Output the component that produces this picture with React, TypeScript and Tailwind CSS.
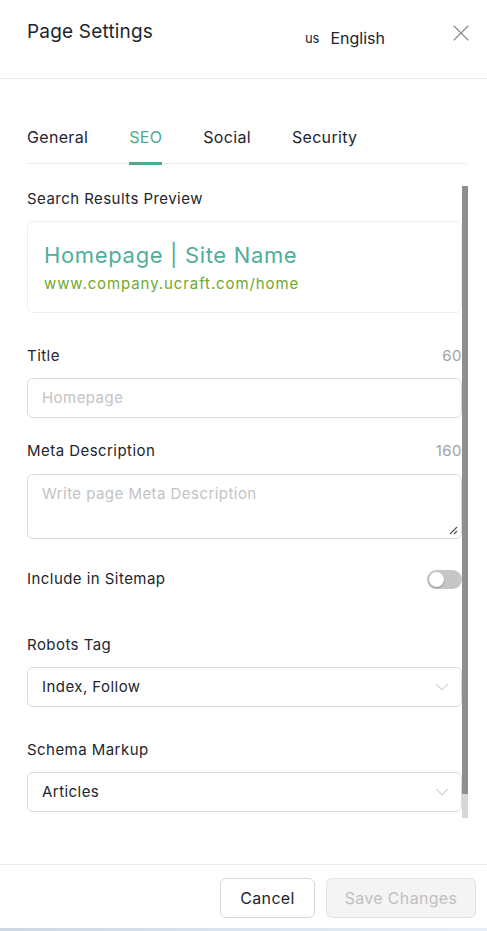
import { X, ChevronDown } from "lucide-react";

function Field({ label, count, children, className }: { label: string; count?: string; children: React.ReactNode; className?: string }) {
  return (
    <div className={className}>
      <div className="flex items-center justify-between text-[15px] leading-[20px] tracking-[0.03em]">
        <span className="text-[#22252e]">{label}</span>
        {count && <span className="text-[#a3a3a3]">{count}</span>}
      </div>
      {children}
    </div>
  );
}

function Select({ value }: { value: string }) {
  return (
    <div className="mt-[12px] h-[40px] rounded-md border border-[#dcdcdc] pl-[14px] pr-[8px] flex items-center justify-between">
      <span className="text-[15px] tracking-[0.03em] text-[#22252e]">{value}</span>
      <ChevronDown size={22} strokeWidth={1} className="text-[#b5b5b5]" />
    </div>
  );
}

export default function App() {
  const tabs = ["General", "SEO", "Social", "Security"];
  return (
    <div className="w-[487px] h-[931px] bg-white flex flex-col text-[#22252e]" style={{ fontFamily: "Inter, 'Open Sans', sans-serif" }}>
      {/* header */}
      <div className="h-[79px] shrink-0 border-b border-[#ececec] pl-[27px] pr-[12px] flex items-start">
        <h1 className="pt-[20px] text-[19px] leading-[24px] tracking-[0.01em] text-[#22252e]">Page Settings</h1>
        <div className="ml-auto mr-[62px] pt-[28px] flex items-center gap-[11px]">
          <span className="text-[13px] leading-[20px]">us</span>
          <span className="text-[16px] leading-[20px]">English</span>
        </div>
        <X size={28} strokeWidth={1} className="mt-[19px] text-[#8a8a8a]" />
      </div>

      {/* tabs */}
      <div className="mx-[27px] mt-[46px] w-[440px] border-b border-[#ececec] flex gap-[41px]">
        {tabs.map((t) => (
          <div key={t} className={"pb-[13px] text-[16px] leading-[24px] tracking-[0.02em] " + (t === "SEO" ? "text-[#4bab8c] border-b-[3px] border-[#4bab8c] -mb-[2px]" : "border-b-[3px] border-transparent -mb-[2px]")}>
            {t}
          </div>
        ))}
      </div>

      {/* scroll area */}
      <div className="mt-[22px] h-[632px] shrink-0 flex pl-[27px]">
        <div className="w-[435px] overflow-hidden pt-[3px]">
          <div className="text-[15px] leading-[20px] tracking-[0.03em]">Search Results Preview</div>
          <div className="mt-[12px] h-[92px] rounded-md border border-[#eeeeee] pl-[16px] pt-[19px]">
            <div className="text-[22px] leading-[28px] tracking-[0.03em] text-[#51ae98]">Homepage | Site Name</div>
            <div className="mt-[5px] text-[15px] leading-[20px] tracking-[0.06em] text-[#6ea82e]">www.company.ucraft.com/home</div>
          </div>

          <Field label="Title" count="60" className="mt-[33px]">
            <div className="mt-[12px] h-[40px] rounded-md border border-[#dcdcdc] pl-[14px] flex items-center text-[15px] tracking-[0.03em] text-[#c3c3c3]">Homepage</div>
          </Field>

          <Field label="Meta Description" count="160" className="mt-[23px]">
            <div className="relative mt-[13px] h-[65px] rounded-md border border-[#dcdcdc] pl-[14px] pt-[9px] text-[15px] leading-[20px] tracking-[0.03em] text-[#c3c3c3]">
              Write page Meta Description
              <svg className="absolute right-[3px] bottom-[3px]" width="9" height="9" viewBox="0 0 9 9">
                <path d="M8 1 L1 8 M8 5 L5 8" stroke="#555" strokeWidth="1.1" />
              </svg>
            </div>
          </Field>

          <div className="mt-[30px] flex items-center justify-between">
            <span className="text-[15px] leading-[20px] tracking-[0.03em]">Include in Sitemap</span>
            <div className="w-[35px] h-[19px] rounded-full bg-[#c6c6c6] flex items-center pl-[2px]">
              <div className="w-[15px] h-[15px] rounded-full bg-white shadow-[0_1px_2px_rgba(0,0,0,0.3)]" />
            </div>
          </div>

          <Field label="Robots Tag" className="mt-[46px]">
            <Select value="Index, Follow" />
          </Field>

          <Field label="Schema Markup" className="mt-[33px]">
            <Select value="Articles" />
          </Field>
        </div>
        {/* scrollbar */}
        <div className="w-[6px] flex flex-col">
          <div className="h-[608px] bg-[#8f8f8f]" />
          <div className="flex-1 bg-[#d6d6d6]" />
        </div>
      </div>

      {/* footer */}
      <div className="mt-[46px] border-t border-[#ececec] pt-[13px] pr-[11px] flex justify-end gap-[11px]">
        <button className="w-[95px] h-[40px] rounded-md border border-[#d9d9d9] bg-white text-[16px] tracking-[0.02em] text-[#22252e]">Cancel</button>
        <button className="w-[150px] h-[40px] rounded-md border border-[#e3e3e3] bg-[#f4f4f4] text-[16px] tracking-[0.02em] text-[#c0c0c0]">Save Changes</button>
      </div>
      <div className="mt-auto h-[3px] bg-gradient-to-r from-[#cdd8e6] to-[#e8eff8]" />
    </div>
  );
}
